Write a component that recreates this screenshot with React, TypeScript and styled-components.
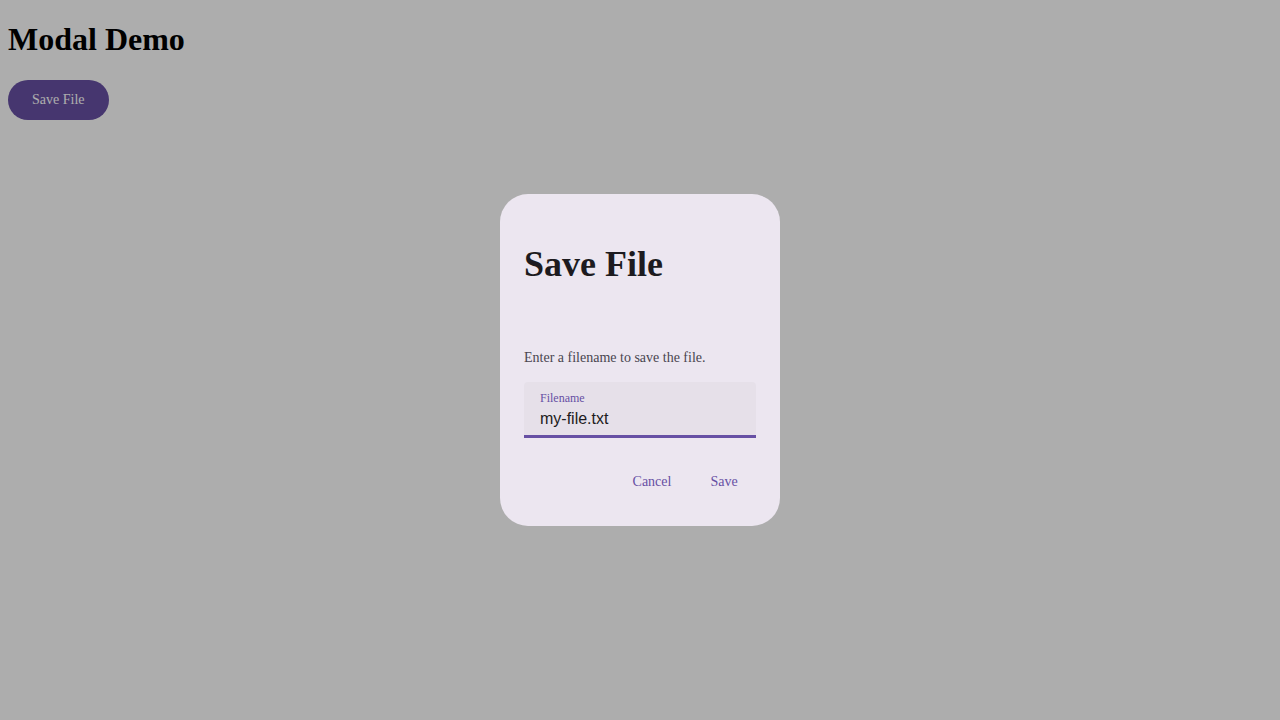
import styled, { createGlobalStyle } from 'styled-components';

const GlobalStyle = createGlobalStyle`
  body {
    margin: 0;
    padding: 0 8px;
    background: #ffffff;
    font-family: 'Liberation Serif', 'Times New Roman', serif;
  }
`;

const Title = styled.h1`
  font-size: 2em;
  margin: 0.67em 0;
  font-weight: bold;
  color: #000;
`;

const FilledButton = styled.button`
  height: 40px;
  padding: 0 24px;
  border: none;
  border-radius: 20px;
  background: #6750a4;
  color: #ffffff;
  font-family: 'Liberation Serif', 'Times New Roman', serif;
  font-size: 14px;
  cursor: pointer;
`;

const Scrim = styled.div`
  position: fixed;
  inset: 0;
  background: rgba(0, 0, 0, 0.32);
  display: flex;
  align-items: center;
  justify-content: center;
`;

const Dialog = styled.div`
  width: 280px;
  box-sizing: border-box;
  padding: 24px;
  border-radius: 28px;
  background: #ece6f0;
  display: flex;
  flex-direction: column;
`;

const Headline = styled.h2`
  margin: 26px 0 0;
  font-size: 36px;
  line-height: 40px;
  font-weight: bold;
  color: #1d1b20;
`;

const Description = styled.p`
  margin: 64px 0 0;
  font-size: 14px;
  line-height: 20px;
  color: #49454f;
`;

const Field = styled.label`
  margin-top: 14px;
  height: 56px;
  box-sizing: border-box;
  padding: 8px 16px 0;
  background: #e6e0e9;
  border-radius: 4px 4px 0 0;
  border-bottom: 3px solid #6750a4;
  display: flex;
  flex-direction: column;
`;

const FieldLabel = styled.span`
  font-size: 12px;
  line-height: 16px;
  color: #6750a4;
`;

const FieldInput = styled.input`
  border: none;
  outline: none;
  background: transparent;
  padding: 0;
  margin: 1px 0 0;
  height: 24px;
  font-family: 'Liberation Sans', Arial, sans-serif;
  font-size: 16px;
  color: #1d1b20;
`;

const Actions = styled.div`
  margin-top: 24px;
  display: flex;
  justify-content: flex-end;
  gap: 8px;
`;

const TextButton = styled.button`
  height: 40px;
  min-width: 64px;
  padding: 0 12px;
  border: none;
  border-radius: 20px;
  background: transparent;
  color: #6750a4;
  font-family: 'Liberation Serif', 'Times New Roman', serif;
  font-size: 14px;
  cursor: pointer;
`;

const App = (): JSX.Element => (
  <>
    <GlobalStyle />
    <Title>Modal Demo</Title>
    <FilledButton>Save File</FilledButton>
    <Scrim>
      <Dialog>
        <Headline>Save File</Headline>
        <Description>Enter a filename to save the file.</Description>
        <Field>
          <FieldLabel>Filename</FieldLabel>
          <FieldInput defaultValue="my-file.txt" />
        </Field>
        <Actions>
          <TextButton>Cancel</TextButton>
          <TextButton>Save</TextButton>
        </Actions>
      </Dialog>
    </Scrim>
  </>
);

export default App;
